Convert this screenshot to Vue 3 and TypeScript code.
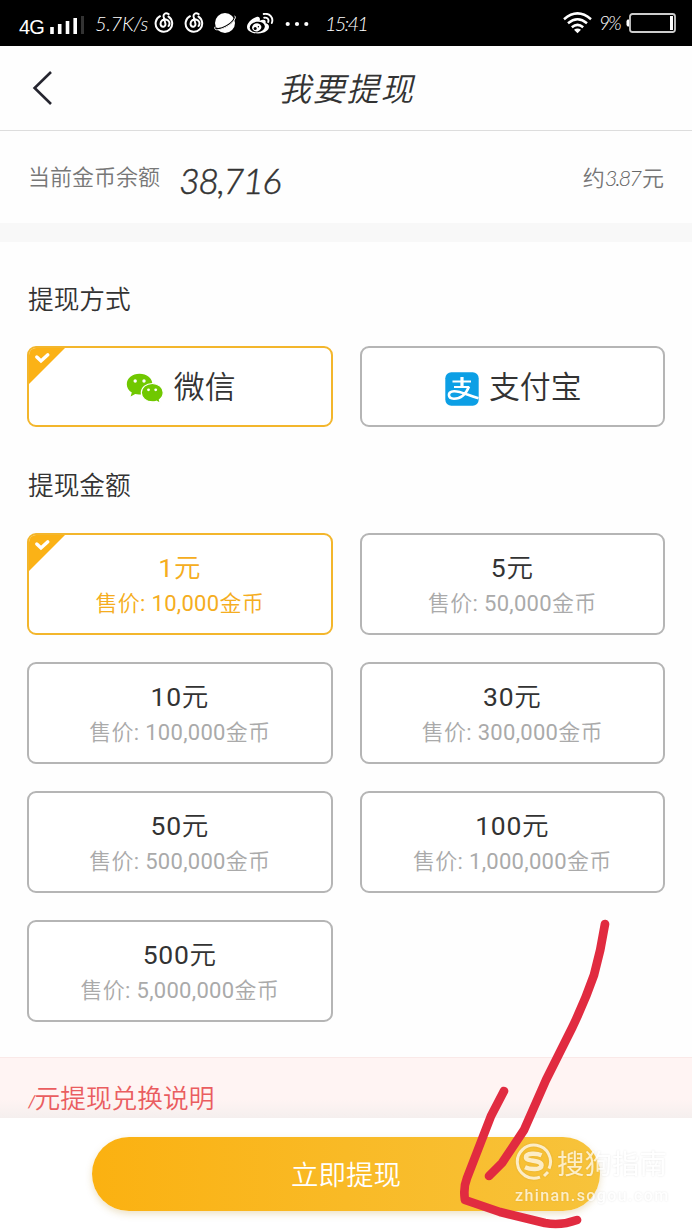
<script setup lang="ts">
import { ref } from 'vue'

interface Amount {
  yuan: number
  coins: string
}

const method = ref<'wechat' | 'alipay'>('wechat')
const selected = ref(1)
const amounts: Amount[] = [
  { yuan: 1, coins: '10,000' },
  { yuan: 5, coins: '50,000' },
  { yuan: 10, coins: '100,000' },
  { yuan: 30, coins: '300,000' },
  { yuan: 50, coins: '500,000' },
  { yuan: 100, coins: '1,000,000' },
  { yuan: 500, coins: '5,000,000' },
]
</script>

<template>
  <div class="screen">
    <div class="status">
      <span class="network">4G</span>
      <svg class="signal" width="35" height="20" viewBox="0 0 35 20">
        <path d="M2 11v7M9.7 8v10M17.5 5v13M25.2 2v16" stroke="#fff" stroke-width="3.6" />
        <path d="M32.5 0v18" stroke="#333" stroke-width="3" />
      </svg>
      <span class="speed hand">5.7K/s</span>
      <svg v-for="n in 2" :key="n" class="music" width="20" height="22" viewBox="0 0 20 22">
        <path d="M6 4.2A8.3 8.3 0 1 0 14.5 4.6M14.6 2.2C11.5 0.2 9 2 9.7 5L11.4 11.6C12 15.2 7.4 15.8 6.6 12.5C6.2 8.9 9 7 12 7.4C15.8 8 16.2 12 14.6 14" fill="none" stroke="#fff" stroke-width="2" stroke-linecap="round" />
      </svg>
      <svg class="planet" width="23" height="22" viewBox="0 0 23 22">
        <circle cx="11" cy="11" r="10" fill="#fff" />
        <path d="M1.5 16.3C8 18 18 12 20.8 5.5" fill="none" stroke="#000" stroke-width="1.5" />
        <path d="M1 14.8C-1 20 8 17.6 14 13.8C20 10 23 4.4 20.5 4" fill="none" stroke="#fff" stroke-width="1" />
      </svg>
      <svg class="weibo" width="27" height="22" viewBox="0 0 27 22">
        <path d="M9.5 4C4 5.5 0 10.5 0 14C0 18 5 20.5 11 20.5C18 20.5 22 17 22 13.8C22 11.5 20 10.5 18.5 10.2C19.5 7 17 5.8 12.7 7.7C13.5 5 12.3 3.2 9.5 4Z" fill="#fff" />
        <ellipse cx="10.3" cy="14" rx="7.6" ry="5.2" transform="rotate(-8 10.3 14)" fill="#000" />
        <ellipse cx="9.7" cy="14.4" rx="4.7" ry="4" transform="rotate(-18 9.7 14.4)" fill="#fff" />
        <circle cx="8.2" cy="15.4" r="1.5" /><circle cx="11.4" cy="13.7" r=".7" />
        <path d="M16.7 1C22.8-.1 26.8 4.7 24.8 10M17.2 4.7C20.2 4.3 22.2 6.3 21.2 9" fill="none" stroke="#fff" stroke-width="1.9" stroke-linecap="round" />
      </svg>
      <svg class="more" width="24" height="6" viewBox="0 0 24 6">
        <g fill="#fff"><circle cx="2.7" cy="3" r="2.1" /><circle cx="12" cy="3" r="2.1" /><circle cx="21.3" cy="3" r="2.1" /></g>
      </svg>
      <span class="clock hand">15:41</span>
      <svg class="wifi" width="29" height="22" viewBox="0 0 29 22">
        <g fill="none" stroke="#fff" stroke-width="2.5"><path d="M1 7.2Q14.5-4.4 28 7.2" /><path d="M5 11.3Q14.5 3.2 24 11.3" /><path d="M8.8 15.2Q14.5 10.5 20.2 15.2" /></g>
        <path d="M11 17.8Q14.5 15 18 17.8L14.5 21.3Z" fill="#fff" />
      </svg>
      <span class="percent hand">9%</span>
      <svg class="battery" width="50" height="20" viewBox="0 0 50 20">
        <rect x="4" y="1" width="45" height="18" rx="2.5" fill="none" stroke="#ccc" stroke-width="1.8" />
        <path d="M3 6.5H1.5L.5 8v4l1 1.5H3z" fill="#fff" />
        <rect x="44" y="3" width="3" height="14" fill="#fff" />
      </svg>
    </div>

    <header class="header">
      <svg class="back" width="22" height="36" viewBox="0 0 22 36">
        <path d="M19 2L2.6 18L19 34" fill="none" stroke="#25252f" stroke-width="2.6" />
      </svg>
      <h1>我要提现</h1>
    </header>

    <section class="balance">
      <span class="label">当前金币余额</span>
      <span class="coins hand">38,716</span>
      <span class="approx">约<span class="hand">3.87</span>元</span>
    </section>

    <main class="content">
      <h2>提现方式</h2>
      <div class="grid">
        <button class="card method" :class="{ active: method === 'wechat' }" @click="method = 'wechat'">
          <svg v-if="method === 'wechat'" class="tick" width="40" height="40" viewBox="0 0 40 40">
            <path d="M0 0H40L0 40Z" fill="#fbb216" /><path d="M9.8 11L14 15L20.8 8.8" fill="none" stroke="#fff" stroke-width="3.4" stroke-linecap="round" />
          </svg>
          <svg class="wechat" width="38" height="31" viewBox="0 0 38 31">
            <path d="M13.5.8C6.3.8.8 5.3.8 11.2c0 3.5 1.9 6.4 5 8.3L4.6 23.4l4.6-2.3c6 1.6 17.2-.9 17.2-9.9C26.4 5.3 20.8.8 13.5.8Z" fill="#70c800" />
            <path d="M26.3 10.5c-6.2 0-11 4-11 9.1s4.8 9.2 11 9.2c1.4 0 2.8-.2 4-.6l4 2.2-.9-3.7c2.4-1.7 3.8-4.2 3.8-7.1 0-5.1-4.8-9.1-10.9-9.1Z" fill="#70c800" stroke="#fff" stroke-width="1.2" />
            <g fill="#fff"><circle cx="9.2" cy="8" r="1.7" /><circle cx="18" cy="8" r="1.7" /><circle cx="22.5" cy="16.8" r="1.4" /><circle cx="29.7" cy="16.8" r="1.4" /></g>
          </svg>
          <span>微信</span>
        </button>
        <button class="card method" :class="{ active: method === 'alipay' }" @click="method = 'alipay'">
          <svg class="alipay" width="34" height="34" viewBox="0 0 34 34">
            <rect x=".3" y=".3" width="33.4" height="33.4" rx="6" fill="#0c9fe5" />
            <g fill="none" stroke="#fff" stroke-width="2"><path d="M7.5 9.5H26M9 15H24" /><path d="M17 5V15" stroke-width="3.2" /><path d="M24 14.5C21 22 16 26.7 9 26.7C2.5 26.7 2 19.5 9 19.2C15.5 18.9 23 23.5 33.5 26.3" stroke-width="2.6" /></g>
          </svg>
          <span>支付宝</span>
        </button>
      </div>

      <h2 class="second">提现金额</h2>
      <div class="grid">
        <button v-for="item in amounts" :key="item.yuan" class="card amount" :class="{ active: selected === item.yuan }" @click="selected = item.yuan">
          <svg v-if="selected === item.yuan" class="tick" width="40" height="40" viewBox="0 0 40 40">
            <path d="M0 0H40L0 40Z" fill="#fbb216" /><path d="M9.8 11L14 15L20.8 8.8" fill="none" stroke="#fff" stroke-width="3.4" stroke-linecap="round" />
          </svg>
          <span class="yuan"><span class="number">{{ item.yuan }}</span>元</span>
          <span class="price">售价<span class="number">: {{ item.coins }}</span>金币</span>
        </button>
      </div>
    </main>

    <section class="notice"><span class="slash">/</span>元提现兑换说明</section>
    <footer class="footer"><button class="submit">立即提现</button></footer>

    <div class="watermark">
      <div class="brand">
        <svg width="38" height="38" viewBox="0 0 38 38">
          <path d="M25 34.1A16.6 16.6 0 1 1 34 25.6M29 33L33 29" fill="none" stroke="#fff" stroke-width="3" />
          <path d="M26.5 12.2C22 10.2 11 9.7 11 14.2C11 19.3 26.5 16.2 26.5 22.3C26.5 27.5 15 26.5 10 24.3" fill="none" stroke="#fff" stroke-width="4.5" />
        </svg>
        <span>搜狗指南</span>
      </div>
      <div class="site">zhinan.sogou.com</div>
    </div>
    <svg class="arrow" width="692" height="1230" viewBox="0 0 692 1230">
      <path d="M605 924Q601 950 594 975Q585 1001 572 1028L546 1080L524 1130L502 1163L489 1176M504 1091L491 1116L467 1178Q463 1188 465 1200L500 1212L545 1223Q561 1226 577 1220" />
    </svg>
  </div>
</template>

<style>
body { margin: 0; background: #fff; }
</style>

<style scoped>
.screen { position: relative; width: 692px; height: 1230px; overflow: hidden; background: #fefefe; color: #333; font-family: Roboto, "Noto Sans CJK SC", sans-serif; font-weight: 350; }
svg { display: block; flex: none; }
button { font: inherit; color: inherit; }
h1, h2 { margin: 0; font-weight: 350; }
.hand { font-family: Lato, sans-serif; font-style: italic; font-weight: 300; white-space: nowrap; }
.status { display: flex; align-items: center; box-sizing: border-box; height: 46px; padding-left: 19px; background: #000; color: #fff; }
.status > * { flex: none; }
.network { width: 31px; font: 20px/24px "Liberation Sans", sans-serif; letter-spacing: -.8px; margin-top: 7px; }
.signal { margin-top: 6px; }
.speed { width: 69px; box-sizing: border-box; padding-left: 10px; font-size: 20px; letter-spacing: -.3px; }
.music { margin-right: 10px; }
.planet { margin-right: 10px; }
.weibo { margin-right: 11px; margin-top: 1px; }
.more { margin-right: 16px; margin-top: 2px; }
.clock { width: 238px; font-size: 20px; letter-spacing: -1.8px; }
.wifi { margin-right: 7px; }
.percent { width: 27px; font-size: 19px; letter-spacing: -2px; margin-top: -2px; }
.header { display: grid; grid-template-columns: 60px 1fr 60px; align-items: center; height: 84px; border-bottom: 1px solid #ddd; }
.back { margin-left: 32px; }
h1 { text-align: center; font: italic 350 32.5px/44px "Noto Sans CJK SC", sans-serif; letter-spacing: 1.5px; padding-left: 1px; margin-top: -3px; }
.balance { display: flex; align-items: center; height: 92px; padding: 0 28px; border-bottom: 19px solid #f8f8f8; color: #777; font-size: 22px; }
.label { margin-top: -4px; }
.coins { margin-left: 19px; color: #333; font-size: 36px; line-height: 42px; letter-spacing: -1.6px; margin-top: 6px; -webkit-text-stroke: .5px #333; }
.approx { margin-left: auto; margin-top: -2px; }
.approx .hand { color: #666; letter-spacing: -2px; padding-right: 2px; }
.content { box-sizing: border-box; height: 815px; padding: 40px 27px 0; }
h2 { height: 36px; padding-left: 1px; font-size: 25.7px; line-height: 36px; }
.second { margin-top: 41px; }
.grid { display: grid; grid-template-columns: 305.5px 305.5px; gap: 27px; margin-top: 28px; }
.second + .grid { margin-top: 29px; }
.card { position: relative; display: flex; align-items: center; justify-content: center; box-sizing: border-box; padding: 0; border: 2px solid #b5b5b5; border-radius: 9px; background: #fff; overflow: hidden; }
.card.active { border-color: #f3b62c; }
.tick { position: absolute; left: -2px; top: -2px; }
.method { height: 80.5px; gap: 10px; font-size: 30.9px; padding-left: 2px; }
.wechat { margin-top: 4px; }
.alipay { margin-top: 5px; }
.method span { line-height: 44px; padding-top: 4px; }
.amount { height: 102px; flex-direction: column; }
.yuan { font-size: 26.5px; line-height: 36px; letter-spacing: .7px; margin-top: 2px; }
.price { font-size: 22px; line-height: 32px; color: #aaa; letter-spacing: .3px; margin-top: 2px; }
.number { font-weight: 400; }
.active .yuan, .active .price { color: #f5ad20; }
.notice { box-sizing: border-box; height: 61px; padding: 23px 28px 0; border-top: 1px solid #fae9e8; background: linear-gradient(#fff4f3 68%, #f5efee); color: #ea5d60; font-size: 25.7px; line-height: 36px; }
.slash { font: italic 18px Lato, sans-serif; margin-right: -1px; }
.footer { display: flex; justify-content: center; align-items: flex-start; box-sizing: border-box; height: 112px; padding-top: 19px; background: #fff; }
.submit { width: 508px; height: 74px; border: 0; padding: 0 0 2px; border-radius: 37px; background: linear-gradient(90deg, #fbb111, #f7c33b); box-shadow: 0 3px 7px #b98b2540; color: #fff; font-size: 27.5px; }
.watermark { position: absolute; left: 515px; top: 1143px; color: #fff; opacity: .72; filter: drop-shadow(0 0 1px #0002); }
.brand { display: flex; align-items: center; gap: 4px; height: 38px; font-size: 27.5px; font-weight: 400; }
.site { margin-top: 4px; font: 500 16px/22px Roboto, sans-serif; letter-spacing: 1.4px; }
.arrow { position: absolute; inset: 0; pointer-events: none; fill: none; stroke: #e12b40; stroke-width: 8.7; stroke-linecap: round; stroke-linejoin: round; }
</style>
